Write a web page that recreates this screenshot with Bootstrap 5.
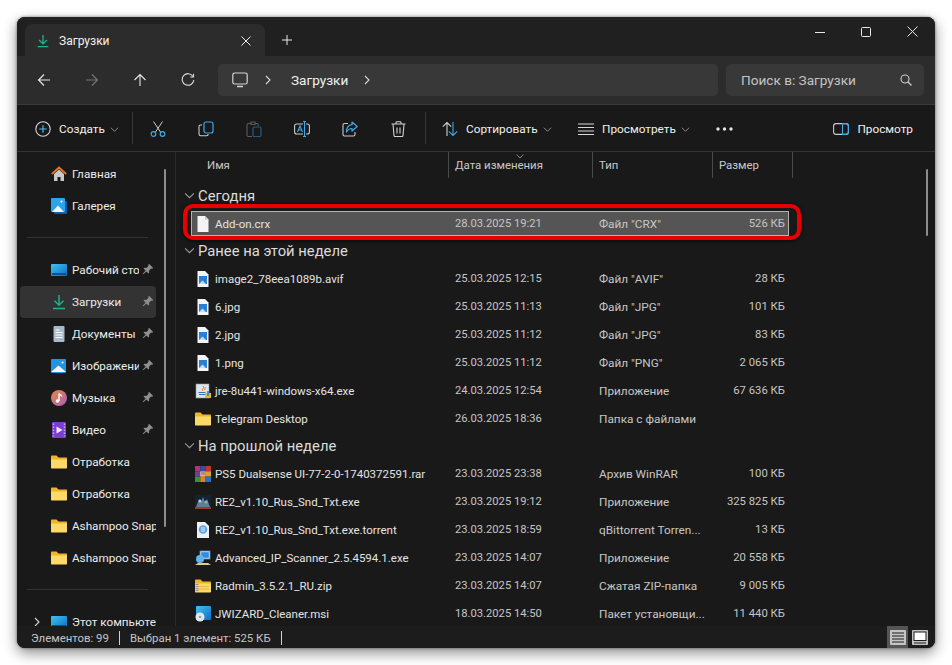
<!doctype html>
<html lang="ru"><head><meta charset="utf-8"><title>Загрузки</title>
<link href="https://cdn.jsdelivr.net/npm/bootstrap@5.3.0/dist/css/bootstrap.min.css" rel="stylesheet">
<style>
html,body{height:100%;background:#fff;overflow:hidden}
body{font-family:Roboto,"Noto Sans","DejaVu Sans",sans-serif;font-size:12px;line-height:16px;color:#e8e8e8}
svg{flex:none;display:block}
.win{margin:17px 0 0 17px;width:918px;height:631px;border-radius:8px;background:#191919;overflow:hidden;box-shadow:0 5px 14px rgba(0,0,0,.45),0 0 3px rgba(0,0,0,.5)}
.titlebar{height:39px;background:#202020;flex:none}
.tab{width:240px;height:32px;margin:7px 0 0 8px;background:#2c2c2c;border-radius:8px 8px 0 0;padding:2px 14px 0 11px;color:#f2f2f2;font-size:12px}
.plus{width:44px;margin-top:7px;height:32px}
.winbtn{width:46px;height:29px}
.navrow{height:49px;background:#2c2c2c;border-bottom:1px solid #3a3a3a;flex:none;padding:0 11px 0 3px}
.navbtn{width:48px;height:32px}
.addr{width:500px;height:32px;background:#383838;border-radius:5px;margin-left:6px;padding-left:14px;font-size:13.6px;color:#f0f0f0}
.search{width:198px;height:32px;background:#383838;border-radius:5px;margin-left:8px;padding:0 12px 0 15px;font-size:13.6px;color:#c4c4c4}
.toolbar{height:47px;background:#191919;border-bottom:1px solid #333;flex:none;padding-top:2px;font-size:11.8px}
.tb-create{width:115px;padding-left:18px;color:#f0f0f0}
.tbsep{width:1px;height:32px;background:#363636;margin-top:-2px}
.tbi{width:48px;height:40px}
.tb-sort{width:152px;padding-left:16px;color:#f0f0f0}
.tb-view{width:138px;color:#f0f0f0}
.tb-dots{width:36px}
.tb-panel{margin-left:auto;padding-right:22px;color:#f0f0f0}
.main{min-height:0;position:relative}
.side{width:159px;flex:none;border-right:1px solid #2a2a2a;position:relative;overflow:hidden;padding:6px 0 0 3px;color:#ececec;font-size:11.7px}
.sitem{height:32px;width:136px;padding-left:31px;border-radius:4px;position:relative}
.sitem.on{background:#333}
.sitem .lbl{margin-left:5px;white-space:nowrap;overflow:hidden;flex:1 1 0;min-width:0}
.sitem .ic{width:16px;height:16px}
.sitem.pin .lbl{margin-right:17px}
.pinic{position:absolute;right:2px;top:9px}
.sdiv{height:1px;background:#333;width:121px;margin:15px 0 16px 7px}
.more{position:relative;left:-19px;width:10px;height:10px;margin-right:-10px}
.thumb{position:absolute;width:2px;background:#8c8c8c;border-radius:1px}
.pane{min-width:0;overflow:hidden;position:relative;padding-left:15px}
.colhead{height:26px;margin-left:-15px;color:#c9c9c9;position:relative;font-size:11.4px}
.ch{height:26px;border-right:1px solid #4a4a4a;padding:5px 0 0 6px;flex:none}
.sortc{position:absolute;left:340px;top:2px}
.ghead{height:27px;font-size:14.8px;color:#dcdcdc;margin-left:-7px;padding-bottom:2px}
.ghead.first{height:33px;padding:2px 0 0}
.ghead svg{margin-right:3px}
.row-f{height:28px;width:598px;position:relative;color:#e4e4e4}
.row-f.sel{height:27px}
.row-f.sel>.inner{height:25px;background:#555;outline:1px solid #b4b4b4;outline-offset:-1px}
.inner{height:28px;width:598px}
.c-name{width:264px;padding-left:4px;flex:none;white-space:nowrap;font-size:11.5px}
.c-name svg{margin-right:4px}
.c-date{width:144px;flex:none;color:#c6c6c6;font-size:11.2px}
.c-type{width:113px;flex:none;color:#c6c6c6;white-space:nowrap;font-size:11.8px}
.c-size{width:77px;flex:none;text-align:right;padding-right:4px;color:#c6c6c6;white-space:nowrap;font-size:11.3px}
.redmark{position:absolute;left:-8px;right:-12px;top:-7px;bottom:-2px;border:4px solid #e60000;border-radius:10px;pointer-events:none;box-shadow:0 1px 4px rgba(0,0,0,.7)}
.status{height:22px;background:#1c1c1c;flex:none;padding:2px 0 0 14px;color:#c4c4c4;position:relative;font-size:11.4px}
.status .vs{width:1px;height:14px;background:#d0d0d0;margin:0 10px}
.vbtn{width:21px;height:22px;margin-top:-2px}
.vbtn.on{background:#555}
.vbtn2{width:16px;margin-top:-2px}
</style></head><body>
<svg width="0" height="0" style="position:absolute">
<defs>
<linearGradient id="gm" x1="0" y1="0" x2="1" y2="1"><stop offset="0" stop-color="#e88a3c"/><stop offset="1" stop-color="#a85cc0"/></linearGradient>
<linearGradient id="gb" x1="0" y1="0" x2="1" y2="1"><stop offset="0" stop-color="#3fc3f0"/><stop offset="1" stop-color="#0f6cc4"/></linearGradient>
<symbol id="dl" viewBox="0 0 16 16"><path d="M8 1v10M3.500 6.800 8 11.300l4.500-4.500M2 14.500h12" fill="none" stroke="#1db28e" stroke-width="1.500"/></symbol>
<symbol id="home" viewBox="0 0 16 16"><path d="M3 8v7h3.500v-4h3v4H13V8L8 3.500z" fill="#c9c9c9"/><path d="M.8 8 8 1.500 15.200 8" fill="none" stroke="#e2762b" stroke-width="1.800"/></symbol>
<symbol id="gal" viewBox="0 0 16 16"><rect x="3" y="3" width="13" height="13" rx="1" fill="#0e5fae"/><rect x="0" y="0" width="14" height="14" rx="1" fill="#2ba4ec"/><path d="M1 14 7 7.500 13 14z" fill="#f4f4f4"/><circle cx="10.500" cy="3.600" r="1.100" fill="#fff"/></symbol>
<symbol id="desk" viewBox="0 0 16 16"><rect y="2" width="16" height="12" rx="1" fill="url(#gb)"/><path d="M1 12h14" stroke="#0c4e9c" stroke-width="2"/></symbol>
<symbol id="doc" viewBox="0 0 16 16"><rect x="2.500" y="0" width="11" height="16" rx="1" fill="#a9b9cc"/><path d="M4.500 4h4M4.500 6.500h7M4.500 9h7M4.500 11.500h7" stroke="#fff" stroke-width="1"/></symbol>
<symbol id="pic" viewBox="0 0 16 16"><rect y="1" width="15" height="14" rx="1" fill="#2295e2"/><path d="M0 14 7.500 7.500 15 14z" fill="#f6f6f6"/><circle cx="11.500" cy="4.500" r="1.100" fill="#fff"/></symbol>
<symbol id="mus" viewBox="0 0 16 16"><circle cx="8" cy="8" r="8" fill="url(#gm)"/><path d="M8 3.500v7.500" stroke="#fff" stroke-width="1.400"/><circle cx="6.500" cy="11" r="1.800" fill="#fff"/><path d="M8 3.500c1 1.500 2.500 1.500 2.800 3" fill="none" stroke="#fff" stroke-width="1.200"/></symbol>
<symbol id="vid" viewBox="0 0 16 16"><rect x="1" y="0" width="14" height="16" rx="1" fill="#7a3fd0"/><path d="M5.500 4.500v7l6-3.500z" fill="#f3e9ff"/><path d="M2.500 1.500v13M13.500 1.500v13" stroke="#c9a8f2" stroke-width="1.400" stroke-dasharray="1.500 1.500"/></symbol>
<symbol id="fold" viewBox="0 0 16 16"><path d="M0 2.500C0 2 .4 1.500 1 1.500h4.500L7.500 3.500H15c.6 0 1 .5 1 1V7H0z" fill="#f0b429"/><path d="M0 5.500h15c.6 0 1 .4 1 1v7c0 .6-.4 1-1 1H1c-.6 0-1-.4-1-1z" fill="#fcd968"/></symbol>
<symbol id="pin" viewBox="0 0 12 12"><path d="M7 .8 11.200 5l-1 .7-1-.2L7 7.700l.2 2-.8.8L4.400 8.400 1.300 11.300.7 10.700 3.600 7.600 1.500 5.600l.8-.8 2 .2L6.500 2.800l-.2-1z" fill="#8b8f94"/></symbol>
<symbol id="file" viewBox="0 0 16 16"><path d="M2.500 0h7.500l3.500 3.500V16h-11z" fill="#f4f4f4"/><path d="M10 0v3.500h3.500z" fill="#c8c8c8"/></symbol>
<symbol id="img" viewBox="0 0 16 16"><path d="M2.500 0h7.500l3.500 3.500V16h-11z" fill="#f4f4f4"/><rect x="4" y="5" width="8" height="8" fill="#2a7fd2"/><path d="M4 13 7.500 9.500 11 13z" fill="#bfe0f7"/></symbol>
<symbol id="jre" viewBox="0 0 16 16"><rect x="1" y="1" width="13" height="14" fill="#dfe4ea" stroke="#8a97a6" stroke-width=".6"/><path d="M8 3c2 2-2 3 0 5M10 4c1 1-1 2 0 3" fill="none" stroke="#e2762b" stroke-width="1"/><path d="M3.500 9.500h7M4 11.500h6" stroke="#3c6fb0" stroke-width="1"/><rect x="10" y="10" width="6" height="5" fill="#f0b429"/><path d="M13 8v5" stroke="#2a7fd2" stroke-width="1.600"/></symbol>
<symbol id="rar" viewBox="0 0 16 16"><rect width="5.300" height="5.300" fill="#b0317a"/><rect x="5.300" width="5.300" height="5.300" fill="#3a4ca8"/><rect x="10.600" width="5.400" height="5.300" fill="#c8352f"/><rect y="5.300" width="5.300" height="5.300" fill="#6f3da0"/><rect x="5.300" y="5.300" width="5.300" height="5.300" fill="#f1e6c8"/><rect x="10.600" y="5.300" width="5.400" height="5.300" fill="#d9a32a"/><rect y="10.600" width="5.300" height="5.400" fill="#3d8f3a"/><rect x="5.300" y="10.600" width="5.300" height="5.400" fill="#d9822a"/><rect x="10.600" y="10.600" width="5.400" height="5.400" fill="#2f6fc0"/><path d="M7 5.500v4M9 5.500v4" stroke="#9a2020" stroke-width="1"/></symbol>
<symbol id="re2" viewBox="0 0 16 16"><rect y="1" width="16" height="14" fill="#14232f"/><path d="M1 13 4 5l2 3 2-5 2 5 2-3 3 8z" fill="#5a7f96"/><circle cx="5" cy="7" r="1.500" fill="#b9d0dc"/><circle cx="11" cy="8" r="1.500" fill="#93afbf"/><rect y="13" width="16" height="2" fill="#9a3b2a"/></symbol>
<symbol id="tor" viewBox="0 0 16 16"><path d="M2 0h8l4 4v12H2z" fill="#eef1f4"/><circle cx="8" cy="7.500" r="4.300" fill="#5ea5e4"/><path d="M7 5v5M9 5v5" stroke="#dceeff" stroke-width="1"/></symbol>
<symbol id="ips" viewBox="0 0 16 16"><rect x="5" y="1" width="10" height="8" fill="#d7e5f2" stroke="#5a86b4" stroke-width=".8"/><rect x="6.200" y="2.200" width="7.600" height="5.600" fill="#2f8ce0"/><circle cx="5" cy="9" r="4" fill="#5fb4ec"/><path d="M0 15l3-2h10l3 2z" fill="#e3c98a"/></symbol>
<symbol id="zip" viewBox="0 0 16 16"><path d="M0 2.500C0 2 .4 1.500 1 1.500h4.500L7.500 3.500H15c.6 0 1 .5 1 1V7H0z" fill="#f0b429"/><path d="M0 5.500h15c.6 0 1 .4 1 1v7c0 .6-.4 1-1 1H1c-.6 0-1-.4-1-1z" fill="#fcd968"/><path d="M2 6v8" stroke="#8d8d8d" stroke-width="3" stroke-dasharray="1 1"/><path d="M2 8.500h12M2 11h12" stroke="#c9a233" stroke-width=".6"/></symbol>
<symbol id="msi" viewBox="0 0 16 16"><rect x="1" y="0" width="15" height="14" rx="1" fill="url(#gb)"/><circle cx="5" cy="11" r="4.500" fill="#e4e8ec"/><circle cx="5" cy="11" r="1.300" fill="#8fa2b3"/></symbol>
<symbol id="chev" viewBox="0 0 10 10"><path d="M1 3l4 4 4-4" fill="none" stroke="#9a9a9a" stroke-width="1"/></symbol>
<symbol id="chr" viewBox="0 0 10 10"><path d="M3 1l4 4-4 4" fill="none" stroke="#d6d6d6" stroke-width="1.100"/></symbol>
</defs></svg>

<div class="win d-flex flex-column">
 <div class="titlebar d-flex">
  <div class="tab d-flex align-items-center">
   <svg width="14" height="16" viewBox="0 0 16 16"><use href="#dl"/></svg>
   <span class="flex-grow-1" style="padding-left:9px">Загрузки</span>
   <svg width="10" height="10" viewBox="0 0 10 10"><path d="M.5.500l9 9M9.500.500l-9 9" stroke="#eee" stroke-width="1"/></svg>
  </div>
  <div class="plus d-flex align-items-center justify-content-center"><svg width="10" height="10" viewBox="0 0 10 10"><path d="M5 0v10M0 5h10" stroke="#e8e8e8" stroke-width="1"/></svg></div>
  <div class="d-flex ms-auto">
   <div class="winbtn d-flex align-items-center justify-content-center"><svg width="10" height="10" viewBox="0 0 10 10"><path d="M0 5.500h10" stroke="#e8e8e8"/></svg></div>
   <div class="winbtn d-flex align-items-center justify-content-center"><svg width="10" height="10" viewBox="0 0 10 10"><rect x=".5" y=".5" width="9" height="9" rx="1" fill="none" stroke="#e8e8e8"/></svg></div>
   <div class="winbtn d-flex align-items-center justify-content-center"><svg width="11" height="11" viewBox="0 0 11 11"><path d="M.5.500l10 10M10.500.500l-10 10" stroke="#e8e8e8"/></svg></div>
  </div>
 </div>

 <div class="navrow d-flex align-items-center">
  <div class="navbtn d-flex align-items-center justify-content-center"><svg width="14" height="14" viewBox="0 0 14 14"><path d="M13 7H1.500M7 1.500 1.500 7 7 12.500" fill="none" stroke="#e8e8e8" stroke-width="1.100"/></svg></div>
  <div class="navbtn d-flex align-items-center justify-content-center"><svg width="14" height="14" viewBox="0 0 14 14"><path d="M1 7h11.500M7 1.500 12.500 7 7 12.500" fill="none" stroke="#777" stroke-width="1.100"/></svg></div>
  <div class="navbtn d-flex align-items-center justify-content-center"><svg width="14" height="14" viewBox="0 0 14 14"><path d="M7 13V1.500M1.500 7 7 1.500 12.500 7" fill="none" stroke="#e8e8e8" stroke-width="1.100"/></svg></div>
  <div class="navbtn d-flex align-items-center justify-content-center"><svg width="14" height="14" viewBox="0 0 14 14"><path d="M12 3.500A5.800 5.800 0 1 0 12.800 7" fill="none" stroke="#dcdcdc" stroke-width="1.100"/><path d="M12.500 .8v3.200H9.300" fill="none" stroke="#dcdcdc" stroke-width="1.100"/></svg></div>
  <div class="addr d-flex align-items-center">
   <svg width="16" height="16" viewBox="0 0 16 16"><rect x=".8" y="1" width="14.400" height="11" rx="1.800" fill="none" stroke="#d4d4d4" stroke-width="1.200"/><path d="M5 14.500h6" stroke="#d4d4d4" stroke-width="1.400"/></svg>
   <svg width="10" height="10" viewBox="0 0 10 10" style="margin-left:15px"><use href="#chr"/></svg>
   <span style="margin-left:18px">Загрузки</span>
   <svg width="10" height="10" viewBox="0 0 10 10" style="margin-left:14px"><use href="#chr"/></svg>
  </div>
  <div class="search d-flex align-items-center justify-content-between">
   <span>Поиск в: Загрузки</span>
   <svg width="12" height="12" viewBox="0 0 12 12"><circle cx="5" cy="5" r="4" fill="none" stroke="#d0d0d0" stroke-width="1.100"/><path d="M8 8l3.500 3.500" stroke="#d0d0d0" stroke-width="1.200"/></svg>
  </div>
 </div>

 <div class="toolbar d-flex align-items-center">
  <div class="tb-create d-flex align-items-center">
   <svg width="16" height="16" viewBox="0 0 16 16"><circle cx="8" cy="8" r="7.200" fill="none" stroke="#d8d8d8" stroke-width="1.100"/><path d="M8 4.200v7.600M4.200 8h7.600" stroke="#4cb8f0" stroke-width="1.200"/></svg>
   <span style="margin-left:8px">Создать</span>
   <svg width="9" height="9" viewBox="0 0 10 10" style="margin-left:5px"><use href="#chev"/></svg>
  </div>
  <div class="tbsep"></div>
  <div class="tbi d-flex align-items-center justify-content-center" style="margin-left:1px"><svg width="16" height="16" viewBox="0 0 16 16"><path d="M3.500 .5 10.500 11M12.500.5 5.500 11" fill="none" stroke="#c9c9c9" stroke-width="1"/><circle cx="3.500" cy="13" r="2.300" fill="none" stroke="#3fa9e8" stroke-width="1.200"/><circle cx="12.500" cy="13" r="2.300" fill="none" stroke="#3fa9e8" stroke-width="1.200"/></svg></div>
  <div class="tbi d-flex align-items-center justify-content-center"><svg width="16" height="16" viewBox="0 0 16 16"><path d="M4 4H2.500C1.500 4 1 4.700 1 5.500v7.500c0 1 .7 1.700 1.700 1.700h6c1 0 1.500-.6 1.500-1.700" fill="none" stroke="#c9c9c9" stroke-width="1.100"/><rect x="6" y="1" width="9" height="11" rx="2" fill="none" stroke="#3fa9e8" stroke-width="1.200"/></svg></div>
  <div class="tbi d-flex align-items-center justify-content-center"><svg width="16" height="16" viewBox="0 0 16 16"><path d="M5 2.500H2.500C1.700 2.500 1 3.100 1 4v10c0 .8.700 1.500 1.500 1.500H6M5 1h4v2.500H5zM9 2.500h2c.8 0 1.200.5 1.200 1.500v1" fill="none" stroke="#5c5c5c" stroke-width="1.100"/><rect x="7" y="6" width="8" height="9.500" rx="1.500" fill="none" stroke="#1f5f85" stroke-width="1.200"/></svg></div>
  <div class="tbi d-flex align-items-center justify-content-center"><svg width="16" height="16" viewBox="0 0 16 16"><rect x=".6" y="3" width="14.800" height="10" rx="2" fill="none" stroke="#c9c9c9" stroke-width="1.100"/><path d="M3.500 11 6 5l2.500 6M4.400 9h3.200" fill="none" stroke="#3fa9e8" stroke-width="1.100"/><path d="M10.500 0v16M9 .5h3M9 15.500h3" stroke="#191919" stroke-width="3"/><path d="M10.500 .5v15M9 .5h3M9 15.500h3" fill="none" stroke="#3fa9e8" stroke-width="1.100"/></svg></div>
  <div class="tbi d-flex align-items-center justify-content-center"><svg width="16" height="16" viewBox="0 0 16 16"><path d="M6 2.500H2.500C1.500 2.500 1 3.200 1 4v9.500c0 1 .6 1.500 1.500 1.500h9c1 0 1.500-.6 1.500-1.500V11" fill="none" stroke="#c9c9c9" stroke-width="1.100"/><path d="M10 1l5.200 4.500L10 10V7.500C7.500 7.500 6 8.500 4.500 11c0-4 2-7 5.500-7.300z" fill="none" stroke="#3fa9e8" stroke-width="1.200" stroke-linejoin="round"/></svg></div>
  <div class="tbi d-flex align-items-center justify-content-center"><svg width="15" height="16" viewBox="0 0 15 16"><path d="M.5 3h14M5 3V1.500C5 1 5.400.7 6 .7h3c.6 0 1 .3 1 .8V3M2 3l1 11.500c0 .5.500 1 1 1h7c.5 0 1-.5 1-1L13 3M6 6.500v6M9 6.500v6" fill="none" stroke="#d2d2d2" stroke-width="1.100"/></svg></div>
  <div class="tbsep" style="margin-left:3px"></div>
  <div class="tb-sort d-flex align-items-center">
   <svg width="16" height="16" viewBox="0 0 16 16"><path d="M5 15V1.500M.8 5.700 5 1.500l4.200 4.200" fill="none" stroke="#d0d0d0" stroke-width="1.100"/><path d="M11 1v13.500M6.800 10.300 11 14.500l4.200-4.200" fill="none" stroke="#3fa9e8" stroke-width="1.100"/></svg>
   <span style="margin-left:8px">Сортировать</span>
   <svg width="9" height="9" viewBox="0 0 10 10" style="margin-left:5px"><use href="#chev"/></svg>
  </div>
  <div class="tb-view d-flex align-items-center">
   <svg width="16" height="13" viewBox="0 0 16 13"><path d="M0 1h16M0 4.500h16M0 8h16M0 11.500h16" stroke="#d8d8d8" stroke-width="1"/></svg>
   <span style="margin-left:8px">Просмотреть</span>
   <svg width="9" height="9" viewBox="0 0 10 10" style="margin-left:5px"><use href="#chev"/></svg>
  </div>
  <div class="tb-dots"><svg width="17" height="4" viewBox="0 0 17 4"><circle cx="2" cy="2" r="1.700" fill="#e4e4e4"/><circle cx="8.500" cy="2" r="1.700" fill="#e4e4e4"/><circle cx="15" cy="2" r="1.700" fill="#e4e4e4"/></svg></div>
  <div class="tb-panel d-flex align-items-center">
   <svg width="16" height="12" viewBox="0 0 16 12"><rect x=".6" y=".6" width="14.800" height="10.800" rx="2.500" fill="none" stroke="#c9c9c9" stroke-width="1.100"/><path d="M9.500 .6h3.400c1.400 0 2.500 1.100 2.500 2.500v5.800c0 1.400-1.100 2.500-2.500 2.500H9.500z" fill="none" stroke="#3fa9e8" stroke-width="1.100"/></svg>
   <span style="margin-left:8px">Просмотр</span>
  </div>
 </div>

 <div class="main d-flex flex-grow-1">
  <div class="side">
   <div class="sitem d-flex align-items-center"><svg class="ic"><use href="#home"/></svg><span class="lbl">Главная</span></div>
   <div class="sitem d-flex align-items-center"><svg class="ic"><use href="#gal"/></svg><span class="lbl">Галерея</span></div>
   <div class="sdiv"></div>
   <div class="sitem pin d-flex align-items-center"><svg class="ic"><use href="#desk"/></svg><span class="lbl">Рабочий стол</span><svg class="pinic" width="12" height="12"><use href="#pin"/></svg></div>
   <div class="sitem pin on d-flex align-items-center"><svg class="ic"><use href="#dl"/></svg><span class="lbl">Загрузки</span><svg class="pinic" width="12" height="12"><use href="#pin"/></svg></div>
   <div class="sitem pin d-flex align-items-center"><svg class="ic"><use href="#doc"/></svg><span class="lbl">Документы</span><svg class="pinic" width="12" height="12"><use href="#pin"/></svg></div>
   <div class="sitem pin d-flex align-items-center"><svg class="ic"><use href="#pic"/></svg><span class="lbl">Изображения</span><svg class="pinic" width="12" height="12"><use href="#pin"/></svg></div>
   <div class="sitem pin d-flex align-items-center"><svg class="ic"><use href="#mus"/></svg><span class="lbl">Музыка</span><svg class="pinic" width="12" height="12"><use href="#pin"/></svg></div>
   <div class="sitem pin d-flex align-items-center"><svg class="ic"><use href="#vid"/></svg><span class="lbl">Видео</span><svg class="pinic" width="12" height="12"><use href="#pin"/></svg></div>
   <div class="sitem d-flex align-items-center"><svg class="ic"><use href="#fold"/></svg><span class="lbl">Отработка</span></div>
   <div class="sitem d-flex align-items-center"><svg class="ic"><use href="#fold"/></svg><span class="lbl">Отработка</span></div>
   <div class="sitem d-flex align-items-center"><svg class="ic"><use href="#fold"/></svg><span class="lbl">Ashampoo Snap</span></div>
   <div class="sitem d-flex align-items-center"><svg class="ic"><use href="#fold"/></svg><span class="lbl">Ashampoo Snap</span></div>
   <div class="sdiv"></div>
   <div class="sitem d-flex align-items-center"><svg class="more" viewBox="0 0 10 10"><use href="#chr"/></svg><svg class="ic"><use href="#desk"/></svg><span class="lbl">Этот компьютер</span></div>
   <div class="thumb" style="left:147px;top:17px;height:358px"></div>
  </div>
  <div class="pane flex-grow-1">
   <div class="colhead d-flex">
    <div class="ch" style="width:273px;padding-left:31px">Имя</div>
    <div class="ch" style="width:144px">Дата изменения</div>
    <div class="ch" style="width:120px">Тип</div>
    <div class="ch" style="width:80px">Размер</div>
    <svg class="sortc" width="8" height="5" viewBox="0 0 8 5"><path d="M.5.500 4 4 7.500.500" fill="none" stroke="#8a8a8a"/></svg>
   </div>
   <div class="ghead first d-flex align-items-center"><svg width="11" height="11" viewBox="0 0 10 10"><use href="#chev"/></svg>Сегодня</div>
   <div class="row-f sel"><div class="inner d-flex align-items-center">
     <div class="c-name d-flex align-items-center"><svg width="16" height="16"><use href="#file"/></svg>Add-on.crx</div><div class="c-date">28.03.2025 19:21</div><div class="c-type">Файл "CRX"</div><div class="c-size">526 КБ</div></div>
     <div class="redmark"></div>
   </div>
   <div class="ghead d-flex align-items-center"><svg width="11" height="11" viewBox="0 0 10 10"><use href="#chev"/></svg>Ранее на этой неделе</div>
   <div class="row-f"><div class="inner d-flex align-items-center"><div class="c-name d-flex align-items-center"><svg width="16" height="16"><use href="#img"/></svg>image2_78eea1089b.avif</div><div class="c-date">25.03.2025 12:15</div><div class="c-type">Файл "AVIF"</div><div class="c-size">28 КБ</div></div></div>
   <div class="row-f"><div class="inner d-flex align-items-center"><div class="c-name d-flex align-items-center"><svg width="16" height="16"><use href="#img"/></svg>6.jpg</div><div class="c-date">25.03.2025 11:13</div><div class="c-type">Файл "JPG"</div><div class="c-size">101 КБ</div></div></div>
   <div class="row-f"><div class="inner d-flex align-items-center"><div class="c-name d-flex align-items-center"><svg width="16" height="16"><use href="#img"/></svg>2.jpg</div><div class="c-date">25.03.2025 11:12</div><div class="c-type">Файл "JPG"</div><div class="c-size">83 КБ</div></div></div>
   <div class="row-f"><div class="inner d-flex align-items-center"><div class="c-name d-flex align-items-center"><svg width="16" height="16"><use href="#img"/></svg>1.png</div><div class="c-date">25.03.2025 11:12</div><div class="c-type">Файл "PNG"</div><div class="c-size">2 065 КБ</div></div></div>
   <div class="row-f"><div class="inner d-flex align-items-center"><div class="c-name d-flex align-items-center"><svg width="16" height="16"><use href="#jre"/></svg>jre-8u441-windows-x64.exe</div><div class="c-date">24.03.2025 12:54</div><div class="c-type">Приложение</div><div class="c-size">67 636 КБ</div></div></div>
   <div class="row-f"><div class="inner d-flex align-items-center"><div class="c-name d-flex align-items-center"><svg width="16" height="16"><use href="#fold"/></svg>Telegram Desktop</div><div class="c-date">26.03.2025 18:36</div><div class="c-type">Папка с файлами</div><div class="c-size"></div></div></div>
   <div class="ghead d-flex align-items-center"><svg width="11" height="11" viewBox="0 0 10 10"><use href="#chev"/></svg>На прошлой неделе</div>
   <div class="row-f"><div class="inner d-flex align-items-center"><div class="c-name d-flex align-items-center"><svg width="16" height="16"><use href="#rar"/></svg>PS5 Dualsense UI-77-2-0-1740372591.rar</div><div class="c-date">23.03.2025 23:38</div><div class="c-type">Архив WinRAR</div><div class="c-size">100 КБ</div></div></div>
   <div class="row-f"><div class="inner d-flex align-items-center"><div class="c-name d-flex align-items-center"><svg width="16" height="16"><use href="#re2"/></svg>RE2_v1.10_Rus_Snd_Txt.exe</div><div class="c-date">23.03.2025 19:12</div><div class="c-type">Приложение</div><div class="c-size">325 825 КБ</div></div></div>
   <div class="row-f"><div class="inner d-flex align-items-center"><div class="c-name d-flex align-items-center"><svg width="16" height="16"><use href="#tor"/></svg>RE2_v1.10_Rus_Snd_Txt.exe.torrent</div><div class="c-date">23.03.2025 18:59</div><div class="c-type">qBittorrent Torren...</div><div class="c-size">13 КБ</div></div></div>
   <div class="row-f"><div class="inner d-flex align-items-center"><div class="c-name d-flex align-items-center"><svg width="16" height="16"><use href="#ips"/></svg>Advanced_IP_Scanner_2.5.4594.1.exe</div><div class="c-date">23.03.2025 14:07</div><div class="c-type">Приложение</div><div class="c-size">20 558 КБ</div></div></div>
   <div class="row-f"><div class="inner d-flex align-items-center"><div class="c-name d-flex align-items-center"><svg width="16" height="16"><use href="#zip"/></svg>Radmin_3.5.2.1_RU.zip</div><div class="c-date">23.03.2025 14:07</div><div class="c-type">Сжатая ZIP-папка</div><div class="c-size">9 005 КБ</div></div></div>
   <div class="row-f"><div class="inner d-flex align-items-center"><div class="c-name d-flex align-items-center"><svg width="16" height="16"><use href="#msi"/></svg>JWIZARD_Cleaner.msi</div><div class="c-date">18.03.2025 14:50</div><div class="c-type">Пакет установщи...</div><div class="c-size">11 440 КБ</div></div></div>
   <div class="thumb" style="right:7px;top:17px;height:67px"></div>
  </div>
 </div>

 <div class="status d-flex align-items-center">
  <span>Элементов: 99</span><span class="vs"></span><span>Выбран 1 элемент: 525 КБ</span><span class="vs"></span>
  <div class="d-flex ms-auto" style="padding-right:7px">
   <div class="vbtn on d-flex align-items-center justify-content-center"><svg width="16" height="15" viewBox="0 0 16 15"><rect width="16" height="15" rx="1" fill="#c4c4c4"/><path d="M2 3h12M2 6h12M2 9h12M2 12h12" stroke="#1c1c1c" stroke-width="1"/></svg></div>
   <div class="vbtn2 d-flex align-items-center justify-content-center ms-1"><svg width="16" height="15" viewBox="0 0 16 15"><rect width="16" height="15" rx="1" fill="#c4c4c4"/><rect x="2" y="2" width="12" height="8.500" fill="#fff" stroke="#1c1c1c"/><path d="M2 13h12" stroke="#1c1c1c"/></svg></div>
  </div>
 </div>
</div>
</body></html>
